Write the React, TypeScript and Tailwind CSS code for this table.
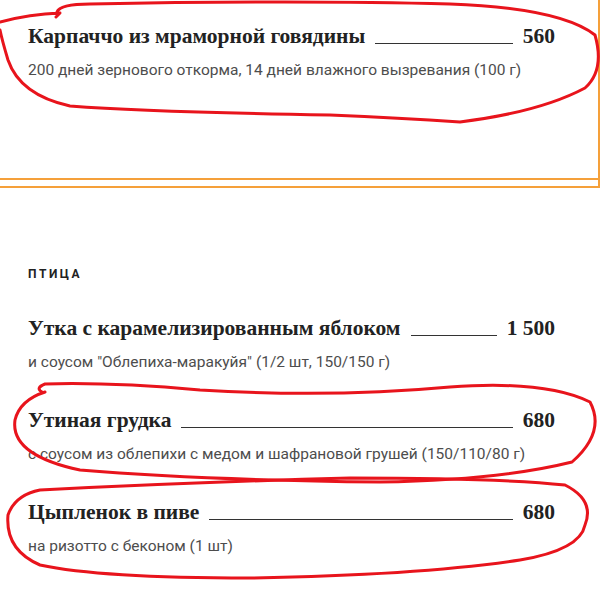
import React from "react";

type Item = { title: string; price: string; desc: string };

const poultry: Item[] = [
  { title: "Утка с карамелизированным яблоком", price: "1 500", desc: 'и соусом "Облепиха-маракуйя" (1/2 шт, 150/150 г)' },
  { title: "Утиная грудка", price: "680", desc: "с соусом из облепихи с медом и шафрановой грушей (150/110/80 г)" },
  { title: "Цыпленок в пиве", price: "680", desc: "на ризотто с беконом (1 шт)" },
];

function MenuItem({ item }: { item: Item }) {
  return (
    <div className="flex flex-col">
      <div className="flex items-end h-[28px]">
        <span className="text-[21.5px] leading-[28px] font-bold text-[#222] font-['Liberation_Serif',serif] whitespace-nowrap">
          {item.title}
        </span>
        <span className="flex-1 mx-[10px] mb-[6px] border-b border-[#333]" />
        <span className="text-[21.5px] leading-[28px] font-bold text-[#222] font-['Liberation_Serif',serif] whitespace-nowrap">
          {item.price}
        </span>
      </div>
      <div className="mt-[10px] text-[15.5px] leading-[20px] text-[#4d4d4d] font-['Roboto',sans-serif]">
        {item.desc}
      </div>
    </div>
  );
}

export default function App() {
  return (
    <div className="relative w-[600px] h-[600px] bg-white overflow-hidden">
      <div className="border-r-2 border-b-2 border-[#f5a03a] pb-[6px]">
        <div className="border-b-2 border-[#f5a03a] pl-[28px] pr-[43px] pt-[22px] h-[180px]">
          <MenuItem
            item={{
              title: "Карпаччо из мраморной говядины",
              price: "560",
              desc: "200 дней зернового откорма, 14 дней влажного вызревания (100 г)",
            }}
          />
        </div>
      </div>
      <div className="pl-[28px] pr-[45px] pt-[78px]">
        <div className="text-[12px] leading-[16px] font-bold tracking-[2.5px] text-[#222] font-['Roboto',sans-serif]">
          ПТИЦА
        </div>
        <div className="mt-[32px] flex flex-col gap-[34px]">
          {poultry.map((it) => (
            <MenuItem key={it.title} item={it} />
          ))}
        </div>
      </div>
      <svg
        className="absolute inset-0 pointer-events-none"
        width="600"
        height="600"
        viewBox="0 0 600 600"
        fill="none"
        stroke="#e8141c"
        strokeWidth="3"
        strokeLinecap="round"
        strokeLinejoin="round"
      >
        <path d="M 0 22 Q 30 14 60 13 L 56 17 M 57 12 Q 60 4 90 4 Q 300 0 450 4 Q 560 8 595 35 Q 605 70 585 88 Q 540 112 460 122 Q 400 118 330 115 Q 150 112 70 106 Q 20 95 8 60 Q 2 40 0 30" />
        <path d="M 42 392 Q 35 388 45 384 Q 110 382 200 390 Q 330 398 450 387 Q 545 380 590 402 Q 606 432 572 462 Q 500 480 380 482 Q 200 480 80 470 Q 10 455 15 420 Q 20 400 45 392" />
        <path d="M 40 490 Q 200 482 350 478 Q 500 478 565 485 Q 595 500 585 525 Q 580 550 520 560 Q 420 575 250 578 Q 100 578 40 565 Q 5 550 8 515 Q 15 495 40 490" />
      </svg>
    </div>
  );
}
